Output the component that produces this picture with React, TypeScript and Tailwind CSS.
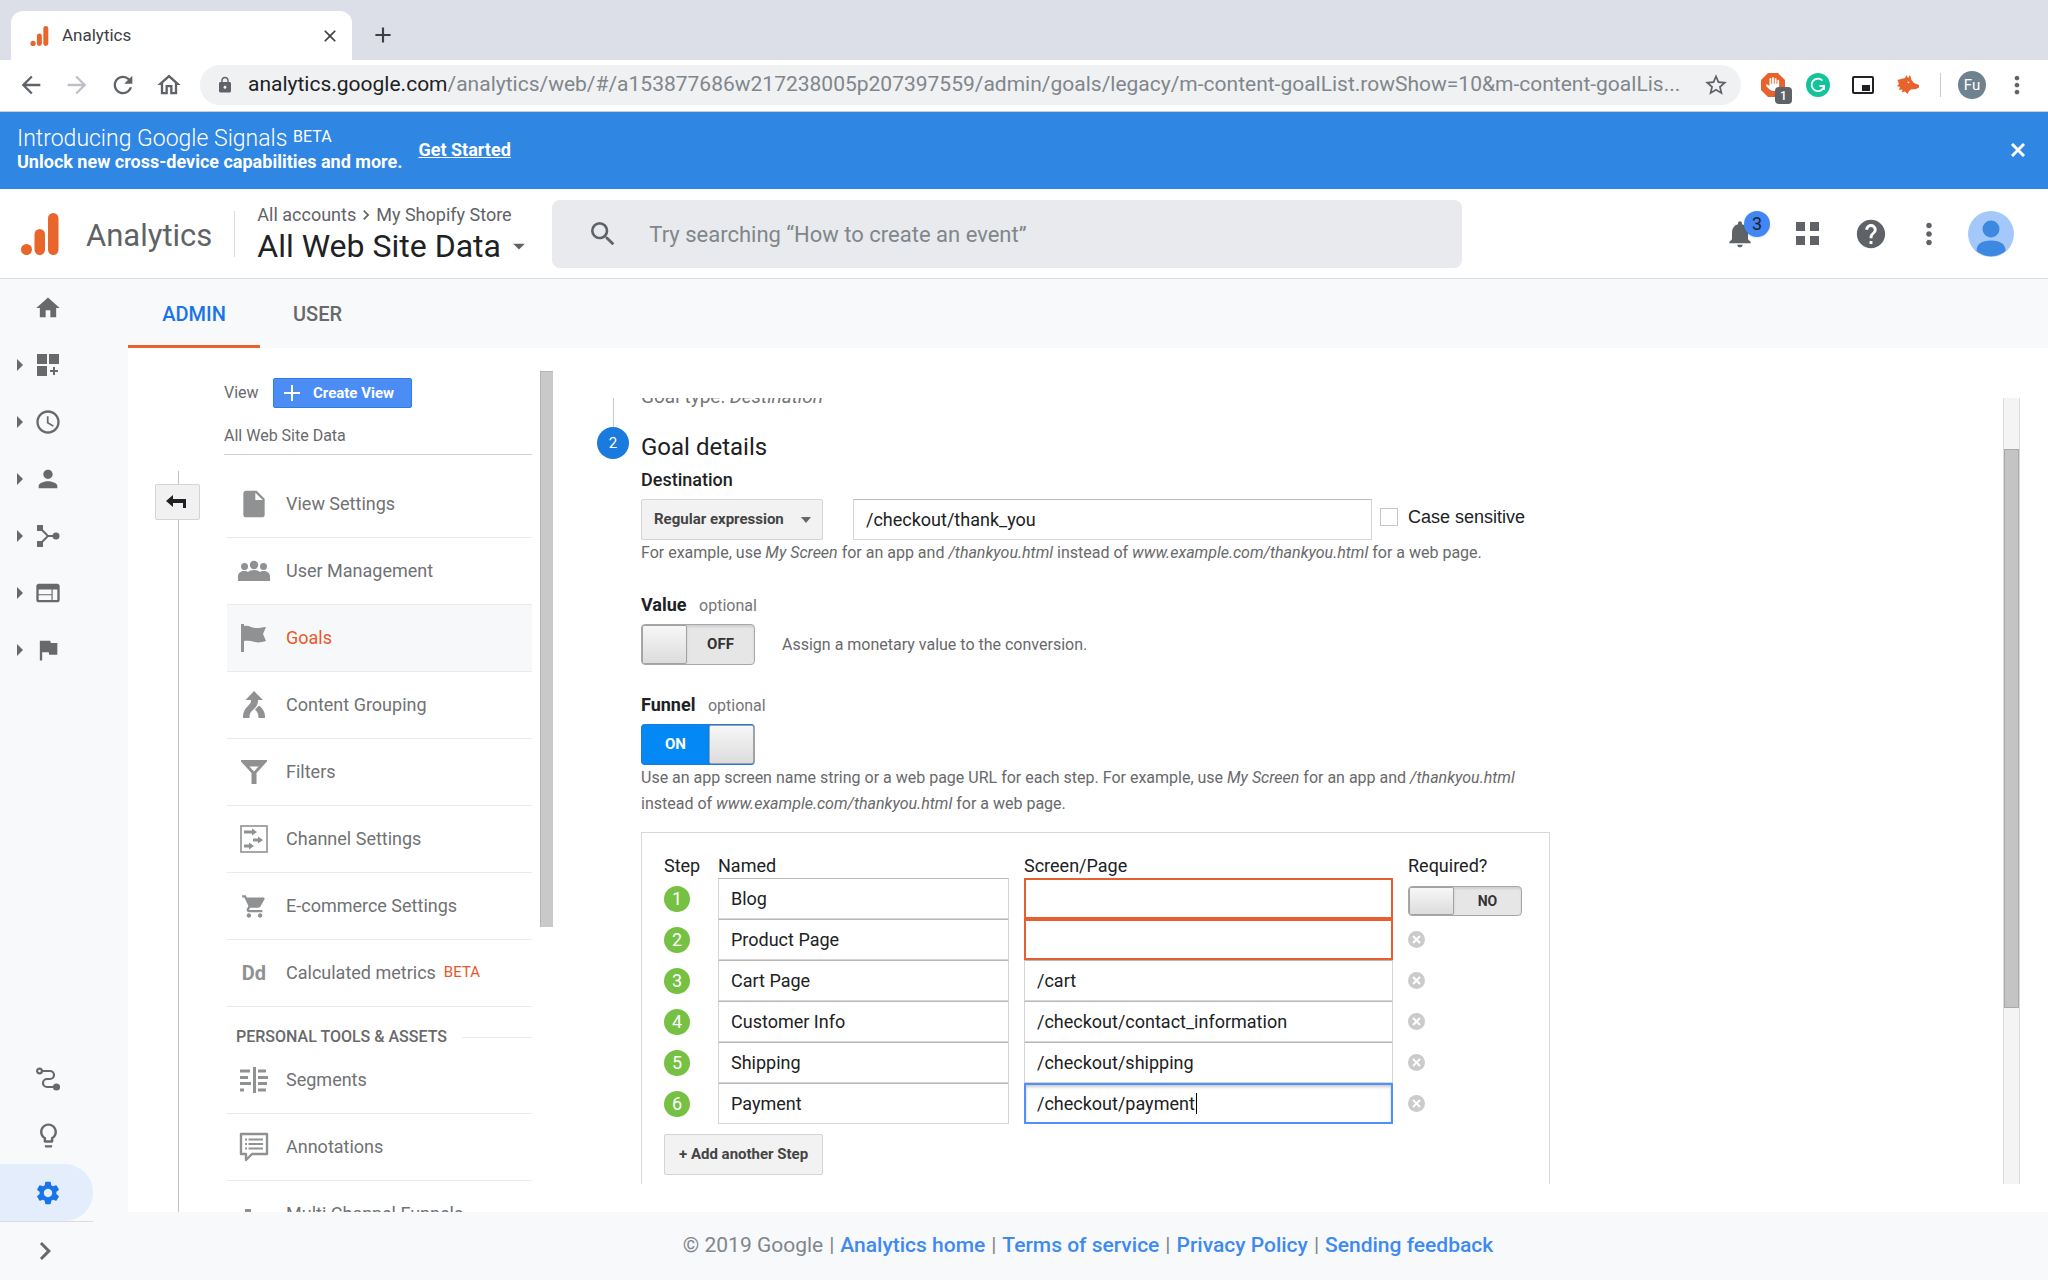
import { useState } from "react";
import type { ReactNode } from "react";
import clsx from "clsx";
import {
  MdAccessTime,
  MdArrowBack,
  MdArrowForward,
  MdClose,
  MdFlag,
  MdHelp,
  MdHome,
  MdLightbulbOutline,
  MdLock,
  MdMoreVert,
  MdNotifications,
  MdOutlineHome,
  MdPerson,
  MdRefresh,
  MdSearch,
  MdSettings,
  MdStarBorder,
  MdWeb,
  MdAdd,
  MdChevronRight,
  MdShoppingCart,
  MdInsertDriveFile,
  MdArrowDropDown,
} from "react-icons/md";
import { FaHand } from "react-icons/fa6";

function AnalyticsLogo({ className }: { className?: string }) {
  return (
    <svg viewBox="0 0 38 42" className={className} fill="#e8662c" aria-hidden>
      <circle cx="5.5" cy="36.5" r="5.5" />
      <rect x="13.5" y="16" width="10.5" height="26" rx="5.2" />
      <rect x="27" y="0" width="10.5" height="42" rx="5.2" />
    </svg>
  );
}

function DashboardIcon() {
  return (
    <svg width={24} height={24} viewBox="0 0 24 24" fill="currentColor" aria-hidden>
      <path d="M1 1h10v10H1zM13 1h10v10H13zM1 13h10v10H1zM17 14h2v3h3v2h-3v3h-2v-3h-3v-2h3z" />
    </svg>
  );
}

function AcquisitionIcon() {
  return (
    <svg width={24} height={24} viewBox="0 0 24 24" fill="currentColor" aria-hidden>
      <path d="M1 1h6v6H1zM1 17h6v6H1z" />
      <circle cx="20" cy="12" r="3.5" />
      <path d="M4 4l8 8-8 8M12 12h6" fill="none" stroke="currentColor" strokeWidth={2} />
    </svg>
  );
}

function AttributionIcon() {
  return (
    <svg width={24} height={24} viewBox="0 0 24 24" fill="none" stroke="currentColor" strokeWidth={2.2} aria-hidden>
      <circle cx="3.5" cy="4" r="2.4" />
      <path d="M6 4h8a4 4 0 0 1 0 8h-3a4 4 0 0 0 0 8h8" />
      <circle cx="20.5" cy="20" r="2.5" fill="currentColor" />
    </svg>
  );
}

function UsersIcon() {
  return (
    <svg width={32} height={22} viewBox="0 0 32 22" fill="currentColor" aria-hidden>
      <circle cx="16" cy="5" r="4.2" />
      <circle cx="6.5" cy="6.5" r="3.5" />
      <circle cx="25.5" cy="6.5" r="3.5" />
      <path d="M0 21v-5c0-3 3-5 6.500-5 1.500 0 2.500.3 3.500 1 1.500-1.300 3.500-2 6-2s4.500.7 6 2c1-.7 2-1 3.500-1 3.500 0 6.500 2 6.500 5v5z" />
    </svg>
  );
}

function WavyFlagIcon() {
  return (
    <svg width={26} height={28} viewBox="0 0 26 28" fill="currentColor" aria-hidden>
      <path d="M0 0h3v28H0zM3 2c4-1.500 8 2 12 2 4 .5 6-1 10-1l-3 7 3 7c-4 1-7 2-11 1-4-.8-7-1.500-11-1z" />
    </svg>
  );
}

function MergeIcon() {
  return (
    <svg width={24} height={28} viewBox="0 0 24 28" fill="currentColor" aria-hidden>
      <path d="M12 0l9 9h-5c0 4-1 6-4 9-3 2.500-4.500 4-4.500 9H1c0-6 1.500-8.500 4.500-11.500C8 13 9 12 9 9H3.500z" />
      <path d="M17 14.500c4 3.500 6 6 6 12.500h-6.500c0-4-1-6-3.500-8.500z" />
    </svg>
  );
}

function FunnelIcon() {
  return (
    <svg width={26} height={24} viewBox="0 0 26 24" fill="currentColor" aria-hidden>
      <path fillRule="evenodd" d="M0 0h26v1.500L15.500 13v11h-5V13L0 1.500zM8.500 6.500l4.500 5 4.500-5z" />
    </svg>
  );
}

function ChannelIcon() {
  return (
    <svg width={28} height={28} viewBox="0 0 28 28" fill="currentColor" aria-hidden>
      <rect x="1" y="1" width="26" height="26" fill="none" stroke="currentColor" strokeWidth={1.6} />
      <path d="M4 5.500h8V3.500l5 3.500-5 3.500V8.500H4zM13 13.500h5v-2l5 3.500-5 3.500v-2h-5zM4 19.500h5v-2l5 3.500-5 3.500v-2H4z" />
    </svg>
  );
}

function SegmentsIcon() {
  return (
    <svg width={30} height={26} viewBox="0 0 30 26" fill="currentColor" aria-hidden>
      <path d="M14 0h3v26h-3zM1 2.500h10v3H1zM1 9h8v3H1zM1 15h11v3H1zM1 21.500h4v3H1zM19 2.500h8v3h-8zM19 9h10v3H19zM19 15h9v3h-9zM19 21.500h8v3h-8z" />
    </svg>
  );
}

function AnnotationsIcon() {
  return (
    <svg width={30} height={30} viewBox="0 0 30 30" fill="none" stroke="currentColor" aria-hidden>
      <path d="M2 2h26v20H13l-6 6v-6H2z" strokeWidth={2.4} strokeLinejoin="round" />
      <path d="M6 7.500h2m1.500 0H24M6 12h2m1.500 0H24M6 16.500h2m1.500 0H24" strokeWidth={2.2} />
    </svg>
  );
}

function PathIcon() {
  return (
    <svg width={28} height={26} viewBox="0 0 28 26" fill="currentColor" aria-hidden>
      <path d="M5 8h6v3H5zM13 14h10v3H13z" />
    </svg>
  );
}

const railItems = [
  { label: "Customization", icon: <DashboardIcon /> },
  { label: "Real-time", icon: <MdAccessTime size={28} /> },
  { label: "Audience", icon: <MdPerson size={28} /> },
  { label: "Acquisition", icon: <AcquisitionIcon /> },
  { label: "Behavior", icon: <MdWeb size={28} /> },
  { label: "Conversions", icon: <MdFlag size={28} /> },
];

const viewMenu = [
  { label: "View Settings", icon: <MdInsertDriveFile size={32} /> },
  { label: "User Management", icon: <UsersIcon /> },
  { label: "Goals", icon: <WavyFlagIcon />, active: true },
  { label: "Content Grouping", icon: <MergeIcon /> },
  { label: "Filters", icon: <FunnelIcon /> },
  { label: "Channel Settings", icon: <ChannelIcon /> },
  { label: "E-commerce Settings", icon: <MdShoppingCart size={27} /> },
  { label: "Calculated metrics", icon: <span className="text-xl leading-6 font-bold">Dd</span>, beta: true },
];

const personalMenu = [
  { label: "Segments", icon: <SegmentsIcon /> },
  { label: "Annotations", icon: <AnnotationsIcon /> },
  { label: "Multi Channel Funnels", icon: <PathIcon /> },
];

const funnelSteps = [
  { name: "Blog", page: "", state: "error" },
  { name: "Product Page", page: "", state: "error" },
  { name: "Cart Page", page: "/cart", state: "idle" },
  { name: "Customer Info", page: "/checkout/contact_information", state: "idle" },
  { name: "Shipping", page: "/checkout/shipping", state: "idle" },
  { name: "Payment", page: "/checkout/payment", state: "focus" },
];

const footerLinks = ["Analytics home", "Terms of service", "Privacy Policy", "Sending feedback"];

function BrowserChrome() {
  return (
    <div className="shrink-0">
      <div className="flex h-[60px] items-end bg-[#dcdfe7] pl-[11px]">
        <div className="flex h-[49px] w-[341px] items-center rounded-t-xl bg-white pr-3 pl-[19px]">
          <AnalyticsLogo className="h-5 w-[19px]" />
          <span className="ml-[13px] flex-1 text-[17px] text-[#3c4043]">Analytics</span>
          <button aria-label="Close tab" className="text-[#3c4043]">
            <MdClose size={20} />
          </button>
        </div>
        <button aria-label="New tab" className="mb-3 ml-[18px] text-[#3c4043]">
          <MdAdd size={26} />
        </button>
      </div>
      <div className="flex h-[52px] items-center border-b border-[#c9cdd3] bg-white pr-[17px] pb-px pl-[17px] text-[#5f6368]">
        <button aria-label="Back"><MdArrowBack size={28} /></button>
        <button aria-label="Forward" className="ml-[18px] text-[#bdc1c6]"><MdArrowForward size={28} /></button>
        <button aria-label="Reload" className="ml-[18px]"><MdRefresh size={28} /></button>
        <button aria-label="Home" className="ml-[18px]"><MdOutlineHome size={28} /></button>
        <div className="ml-[17px] flex h-10 min-w-0 flex-1 items-center rounded-full bg-[#f0f1f3] pr-3 pl-4">
          <MdLock size={18} className="shrink-0" />
          <p className="ml-[14px] min-w-0 flex-1 truncate text-[21px] text-[#80868b]">
            <span className="text-[#202124]">analytics.google.com</span>
            /analytics/web/#/a153877686w217238005p207397559/admin/goals/legacy/m-content-goalList.rowShow=10&amp;m-content-goalLis...
          </p>
          <button aria-label="Bookmark this page" className="ml-4"><MdStarBorder size={26} /></button>
        </div>
        <button aria-label="Ad blocker" className="relative ml-5">
          <svg width={24} height={24} viewBox="0 0 24 24" aria-hidden>
            <path d="M7 0h10l7 7v10l-7 7H7l-7-7V7z" fill="#e8622c" />
          </svg>
          <FaHand size={14} className="absolute top-1 left-[5px] text-white" />
          <span className="absolute top-[14px] left-[14px] flex h-[17px] w-[17px] items-center justify-center rounded-sm bg-[#5f6368] text-xs font-medium text-white">1</span>
        </button>
        <button aria-label="Grammar checker" className="ml-[21px]">
          <svg width={24} height={24} viewBox="0 0 24 24" fill="none" aria-hidden>
            <circle cx="12" cy="12" r="12" fill="#15c39a" />
            <path d="M16.5 7.500A6.300 6.300 0 1 0 18 13.500M18 17v-4h-4.500" stroke="#fff" strokeWidth={1.8} />
          </svg>
        </button>
        <button aria-label="Picture in picture" className="ml-[21px] text-[#202124]">
          <svg width={24} height={24} viewBox="0 0 24 24" fill="none" aria-hidden>
            <rect x="2" y="4" width="20" height="16" rx="1" stroke="currentColor" strokeWidth={2} />
            <path d="M11 12h8v6h-8z" fill="currentColor" />
          </svg>
        </button>
        <button aria-label="Fox extension" className="ml-[21px]">
          <svg width={24} height={24} viewBox="0 0 24 24" fill="#e8622c" aria-hidden>
            <path fillRule="evenodd" d="M9 5l1.500-3 1.500 3 2-3 1.500 5 2.500 3 5 2v2.500l-3 1.500-5 .5-2 1.500-1.500 3-2.500-2.500-3 1 .5-3-3.500.5 1-3-3-1 2-2-1.500-4L5 6zM13.500 9l-2.500-.5 1.500 2z" />
          </svg>
        </button>
        <span className="ml-5 h-6 w-px bg-[#c9cdd3]" />
        <button aria-label="Profile" className="ml-[17px] flex h-7 w-7 items-center justify-center rounded-full bg-[#6f8290] text-[15px] text-white">Fu</button>
        <button aria-label="Browser menu" className="ml-[17px]"><MdMoreVert size={28} /></button>
      </div>
    </div>
  );
}

function SignalsBanner() {
  return (
    <div className="flex h-[77px] shrink-0 items-center bg-[#2f86e3] pr-[23px] pb-px pl-[17px] text-white">
      <div>
        <p className="text-[23px] leading-6 font-light">
          Introducing Google Signals <span className="align-[4px] text-base leading-none font-normal">BETA</span>
        </p>
        <p className="text-lg leading-[22px] font-bold">Unlock new cross-device capabilities and more.</p>
      </div>
      <a href="#signals" className="ml-4 text-lg font-bold underline">Get Started</a>
      <button aria-label="Dismiss" className="ml-auto">
        <svg width={14} height={14} viewBox="0 0 14 14" stroke="currentColor" strokeWidth={3} aria-hidden>
          <path d="M1 1l12 12M13 1L1 13" />
        </svg>
      </button>
    </div>
  );
}

function Header() {
  return (
    <header className="flex h-[90px] shrink-0 items-center border-b border-[#dadce0] bg-white pt-px pr-[34px] pl-[21px] text-[#5f6368]">
      <AnalyticsLogo className="h-[42px] w-[38px] shrink-0" />
      <span className="ml-[27px] pt-1 text-[31px]">Analytics</span>
      <span className="ml-[22px] h-[46px] w-px bg-[#dadce0]" />
      <div className="ml-[22px] w-[295px] shrink-0">
        <p className="flex items-center text-lg leading-6">
          All accounts
          <MdChevronRight size={20} />
          My Shopify Store
        </p>
        <button className="flex items-center text-[32px] leading-[38px] text-[#202124]">
          All Web Site Data
          <MdArrowDropDown size={28} className="ml-1 text-[#5f6368]" />
        </button>
      </div>
      <label className="flex h-[68px] w-[910px] items-center rounded-lg bg-[#e8eaed]">
        <MdSearch size={32} className="ml-[35px] shrink-0" />
        <input
          aria-label="Search"
          placeholder="Try searching “How to create an event”"
          className="ml-[30px] min-w-0 flex-1 bg-transparent text-[22px] outline-none placeholder:text-[#80868b]"
        />
      </label>
      <div className="ml-auto flex items-center">
        <button aria-label="Notifications" className="relative">
          <MdNotifications size={32} />
          <span className="absolute -top-[7px] left-5 flex h-[26px] w-[26px] items-center justify-center rounded-full bg-[#4285f4] text-lg text-[#202124] shadow">3</span>
        </button>
        <button aria-label="Apps" className="ml-10">
          <svg width={24} height={24} viewBox="0 0 24 24" fill="currentColor" aria-hidden>
            <path d="M0 0h9v9H0zM14 0h9v9h-9zM0 14h9v9H0zM14 14h9v9h-9z" />
          </svg>
        </button>
        <button aria-label="Help" className="ml-[34px]"><MdHelp size={34} /></button>
        <button aria-label="More" className="ml-6"><MdMoreVert size={34} /></button>
        <button aria-label="Account" className="ml-[22px]">
          <svg width={46} height={46} viewBox="0 0 46 46" aria-hidden>
            <circle cx="23" cy="23" r="23" fill="#a5c8fa" />
            <circle cx="23" cy="18" r="8.5" fill="#3d88e0" />
            <path d="M8.500 40c0-7 5-10.500 14.500-10.500S37.500 33 37.500 40A22.900 22.900 0 0 1 8.500 40z" fill="#3d88e0" />
          </svg>
        </button>
      </div>
    </header>
  );
}

function NavRail() {
  return (
    <nav className="flex w-32 shrink-0 flex-col text-[#68696b]">
      <a href="#home" aria-label="Home" className="flex h-[57px] w-24 items-center justify-center"><MdHome size={28} /></a>
      {railItems.map((item) => (
        <a key={item.label} href="#report" aria-label={item.label} className="flex h-[57px] items-center">
          <svg width={6} height={12} viewBox="0 0 6 12" fill="currentColor" className="ml-[17px]" aria-hidden>
            <path d="M0 0l6 6-6 6z" />
          </svg>
          <span className="ml-[9px] flex w-8 justify-center">{item.icon}</span>
        </a>
      ))}
      <div className="mt-auto">
        <a href="#attribution" aria-label="Attribution" className="flex h-[57px] w-24 items-center justify-center"><AttributionIcon /></a>
        <a href="#discover" aria-label="Discover" className="flex h-[57px] w-24 items-center justify-center"><MdLightbulbOutline size={29} /></a>
        <a href="#admin" aria-label="Admin" className="flex h-[57px] w-[93px] items-center rounded-r-full bg-[#e3edfb] text-[#1a73e8]">
          <MdSettings size={28} className="ml-[34px]" />
        </a>
        <div className="h-px w-[93px] bg-[#dadce0]" />
        <button aria-label="Expand navigation" className="flex h-[58px] w-[90px] items-center justify-center"><MdChevronRight size={36} /></button>
      </div>
    </nav>
  );
}

function MenuRow({ label, icon, active, beta }: { label: string; icon: ReactNode; active?: boolean; beta?: boolean }) {
  return (
    <li className={clsx("h-[67px] border-b border-[#ebebeb]", active && "bg-[#f7f8f9]")}>
      <a href="#menu" className={clsx("flex h-full items-center text-lg", active ? "text-[#e8582a]" : "text-[#707274]")}>
        <span className="ml-[11px] flex w-8 shrink-0 justify-center text-[#8f9193]">{icon}</span>
        <span className="ml-4 whitespace-nowrap">{label}</span>
        {beta && <span className="ml-2 text-[15px] text-[#e8582a]">BETA</span>}
      </a>
    </li>
  );
}

function ViewColumn() {
  return (
    <div className="flex shrink-0 overflow-hidden">
      <div className="flex w-24 flex-col pt-[123px] pl-[27px]">
        <div className="ml-[23px] h-[13px] w-px bg-[#c4c4c4]" />
        <button aria-label="Back" className="flex h-9 w-[45px] shrink-0 items-center justify-center rounded-xs border border-[#d4d4d4] bg-[#f1f1f1] pr-1">
          <svg width={20} height={14} viewBox="0 0 20 14" fill="#202124" aria-hidden>
            <path d="M0 6l7-6v4h13v9h-3V8H7v4z" />
          </svg>
        </button>
        <div className="ml-[23px] w-px flex-1 bg-[#c4c4c4]" />
      </div>
      <div className="w-[308px] pt-[30px] text-[#68696b]">
        <div className="flex h-[30px] items-center">
          <span className="text-base">View</span>
          <button className="mr-[120px] ml-auto flex h-full w-[139px] items-center rounded-xs border border-[#2f7de0] bg-[#4b8df5] text-[15px] font-bold text-white">
            <svg width={18} height={18} viewBox="0 0 18 18" stroke="currentColor" strokeWidth={2} className="ml-[9px]" aria-hidden>
              <path d="M9 1v16M1 9h16" />
            </svg>
            <span className="ml-3">Create View</span>
          </button>
        </div>
        <div className="flex h-[47px] items-center border-b border-[#d0d0d0] pt-[10px] text-base">All Web Site Data</div>
        <ul className="mt-4 ml-[3px]">
          {viewMenu.map((item) => (
            <MenuRow key={item.label} {...item} />
          ))}
        </ul>
        <div className="ml-[12px] flex h-10 items-center pt-5">
          <h3 className="text-base leading-[22px] font-medium whitespace-nowrap">PERSONAL TOOLS &amp; ASSETS</h3>
          <span className="ml-[15px] h-px flex-1 bg-[#ebebeb]" />
        </div>
        <ul className="ml-[3px]">
          {personalMenu.map((item) => (
            <MenuRow key={item.label} {...item} />
          ))}
        </ul>
      </div>
      <div className="mt-[23px] ml-2 h-[556px] w-[13px] border-t border-l border-[#b5b5b5] bg-[#c9c9c9]" />
    </div>
  );
}

function Toggle({ label, on, offText, onText, small }: { label: string; on?: boolean; offText: string; onText: string; small?: boolean }) {
  const [checked, setChecked] = useState(!!on);
  return (
    <label
      className={clsx(
        "flex w-[114px] cursor-pointer overflow-hidden rounded-sm border font-bold",
        small ? "h-[30px] text-sm" : "h-[41px] text-[15px]",
        checked
          ? "flex-row-reverse border-[#2079d8] border-r-[#a0a2a5] bg-[#0488f5] text-white"
          : "border-[#a5a7aa] bg-[#e6e6e6] text-[#333] shadow-[inset_0_2px_2px_#cfcfcf]",
      )}
    >
      <input type="checkbox" aria-label={label} checked={checked} onChange={(e) => setChecked(e.target.checked)} className="sr-only" />
      <span className="w-[45px] rounded-xs border border-[#a0a2a5] bg-linear-to-b from-[#f7f7f7] to-[#dcdcdc] shadow-sm" />
      <span className="flex flex-1 items-center justify-center">{checked ? onText : offText}</span>
    </label>
  );
}

function FunnelTable() {
  return (
    <div className="mt-[15px] w-[909px] border border-[#d8d8d8] pr-7 pb-8 pl-[22px]">
      <table className="w-full table-fixed">
        <thead>
          <tr className="text-left text-lg leading-[25px]">
            <th className="w-[54px] pt-5 font-normal">Step</th>
            <th className="w-[306px] pt-5 font-normal">Named</th>
            <th className="w-[384px] pt-5 font-normal">Screen/Page</th>
            <th className="pt-5 font-normal">Required?</th>
          </tr>
        </thead>
        <tbody>
          {funnelSteps.map((step, i) => (
            <tr key={step.name} className="h-[41px]">
              <td className="p-0">
                <span className="flex h-[26px] w-[26px] items-center justify-center rounded-full bg-[#76c043] text-lg text-white">{i + 1}</span>
              </td>
              <td className="p-0 pr-[15px]">
                <input
                  aria-label={`Step ${i + 1} name`}
                  defaultValue={step.name}
                  className="block h-[41px] w-full border border-[#d5d5d5] border-t-[#b9b9b9] px-3 text-lg outline-none"
                />
              </td>
              <td className="relative p-0 pr-[15px]">
                <input
                  aria-label={`Step ${i + 1} screen or page`}
                  defaultValue={step.page}
                  className={clsx(
                    "block h-[41px] w-full text-lg outline-none",
                    step.state === "error" && "border-2 border-[#e5602e] px-[11px]",
                    step.state === "idle" && "border border-[#d5d5d5] border-t-[#b9b9b9] px-3",
                    step.state === "focus" && "border-2 border-[#4d90fe] px-[11px] shadow-[inset_0_2px_3px_#ccc]",
                  )}
                />
                {step.state === "focus" && <span className="absolute top-[10px] left-[172px] h-[21px] w-px bg-black" />}
              </td>
              <td className={clsx("p-0", i === 0 && "pt-1")}>
                {i === 0 ? (
                  <Toggle label="Required" offText="NO" onText="YES" small />
                ) : (
                  <button aria-label={`Remove step ${i + 1}`} className="block">
                    <svg width={17} height={17} viewBox="0 0 17 17" aria-hidden>
                      <circle cx="8.5" cy="8.5" r="8.5" fill="#cbcbcb" />
                      <path d="M5 5l7 7M12 5l-7 7" stroke="#fff" strokeWidth={2} />
                    </svg>
                  </button>
                )}
              </td>
            </tr>
          ))}
        </tbody>
      </table>
      <button className="mt-[10px] h-[41px] rounded-xs border border-[#d4d4d4] bg-[#f2f2f2] px-[14px] text-[15px] font-bold text-[#444]">+ Add another Step</button>
    </div>
  );
}

function GoalForm() {
  return (
    <div className="flex min-w-0 flex-1 pt-[50px] pr-7 pb-7 pl-11 text-[#202124]">
      <div className="flex min-w-0 flex-1 overflow-hidden">
        <div className="flex w-8 shrink-0 flex-col items-center">
          <span className="h-[29px] w-px bg-[#c9c9c9]" />
          <span className="flex h-8 w-8 items-center justify-center rounded-full bg-[#1a7ade] text-[15px] text-white">2</span>
        </div>
        <form className="ml-3 min-w-0 flex-1">
          <p className="-mt-[13px] text-[19px] leading-6 text-[#757575]">
            Goal type: <i>Destination</i>
          </p>
          <h2 className="mt-[23px] text-2xl leading-[30px]">Goal details</h2>
          <h3 className="mt-[6px] text-lg leading-6 font-medium">Destination</h3>
          <div className="mt-[7px] flex">
            <div className="relative">
              <select aria-label="Match type" className="h-[41px] w-[182px] appearance-none rounded-xs border border-[#d4d4d4] bg-[#f2f2f2] pl-3 text-[15px] font-bold text-[#444]">
                <option>Regular expression</option>
                <option>Equals to</option>
                <option>Begins with</option>
              </select>
              <svg width={10} height={6} viewBox="0 0 10 6" fill="#666" className="pointer-events-none absolute top-[18px] right-3" aria-hidden>
                <path d="M0 0h10L5 6z" />
              </svg>
            </div>
            <input
              aria-label="Destination"
              defaultValue="/checkout/thank_you"
              className="ml-[30px] h-[41px] w-[519px] border border-[#d5d5d5] border-t-[#b9b9b9] px-3 text-lg outline-none"
            />
            <label className="ml-2 flex h-[35px] items-center font-['Liberation_Sans',Arial,sans-serif] text-lg">
              <input type="checkbox" className="mr-[10px] h-[18px] w-[18px] appearance-none border border-[#c6c6c6] bg-white" />
              Case sensitive
            </label>
          </div>
          <p className="text-base leading-[26px] text-[#68696b]">
            For example, use <i>My Screen</i> for an app and <i>/thankyou.html</i> instead of <i>www.example.com/thankyou.html</i> for a web page.
          </p>

          <h3 className="mt-[27px] text-lg leading-6 font-bold">
            Value <span className="ml-2 text-base leading-6 font-normal text-[#757575]">optional</span>
          </h3>
          <div className="mt-[6px] flex items-center">
            <Toggle label="Value" offText="OFF" onText="ON" />
            <span className="ml-[27px] text-base text-[#68696b]">Assign a monetary value to the conversion.</span>
          </div>

          <h3 className="mt-[28px] text-lg leading-6 font-bold">
            Funnel <span className="ml-2 text-base leading-6 font-normal text-[#757575]">optional</span>
          </h3>
          <div className="mt-[6px] flex">
            <Toggle label="Funnel" on offText="OFF" onText="ON" />
          </div>
          <p className="text-base leading-[26px] text-[#68696b]">
            Use an app screen name string or a web page URL for each step. For example, use <i>My Screen</i> for an app and <i>/thankyou.html</i>
            <br />
            instead of <i>www.example.com/thankyou.html</i> for a web page.
          </p>
          <FunnelTable />
        </form>
        <div className="flex w-[17px] shrink-0 flex-col border-x border-[#dcdcdc] bg-[#f4f4f4] pt-[51px]">
          <div className="h-[559px] border border-[#a8a9a8] bg-[#c3c4c3]" />
        </div>
      </div>
    </div>
  );
}

export default function App() {
  return (
    <div className="flex h-screen flex-col overflow-hidden bg-[#f8f9fb] font-[Roboto,sans-serif]">
      <BrowserChrome />
      <SignalsBanner />
      <Header />
      <div className="flex min-h-0 flex-1">
        <NavRail />
        <main className="flex min-w-0 flex-1 flex-col">
          <div className="flex h-[69px] shrink-0 text-xl font-medium">
            <a href="#admin" className="flex w-[132px] items-center justify-center border-b-3 border-[#e8622c] pt-1 text-[#1a73e8]">ADMIN</a>
            <a href="#user" className="flex items-center border-b-3 border-transparent px-[33px] pt-1 text-[#68696b]">USER</a>
          </div>
          <div className="flex min-h-0 flex-1 overflow-hidden bg-white">
            <ViewColumn />
            <GoalForm />
          </div>
          <footer className="flex h-[68px] shrink-0 items-center justify-center gap-[6px] text-[21px] text-[#80868b]">
            <span>© 2019 Google</span>
            {footerLinks.map((link) => (
              <span key={link} className="flex gap-[6px]">
                |
                <a href="#footer" className="font-medium text-[#3f8af0]">{link}</a>
              </span>
            ))}
          </footer>
        </main>
      </div>
    </div>
  );
}
